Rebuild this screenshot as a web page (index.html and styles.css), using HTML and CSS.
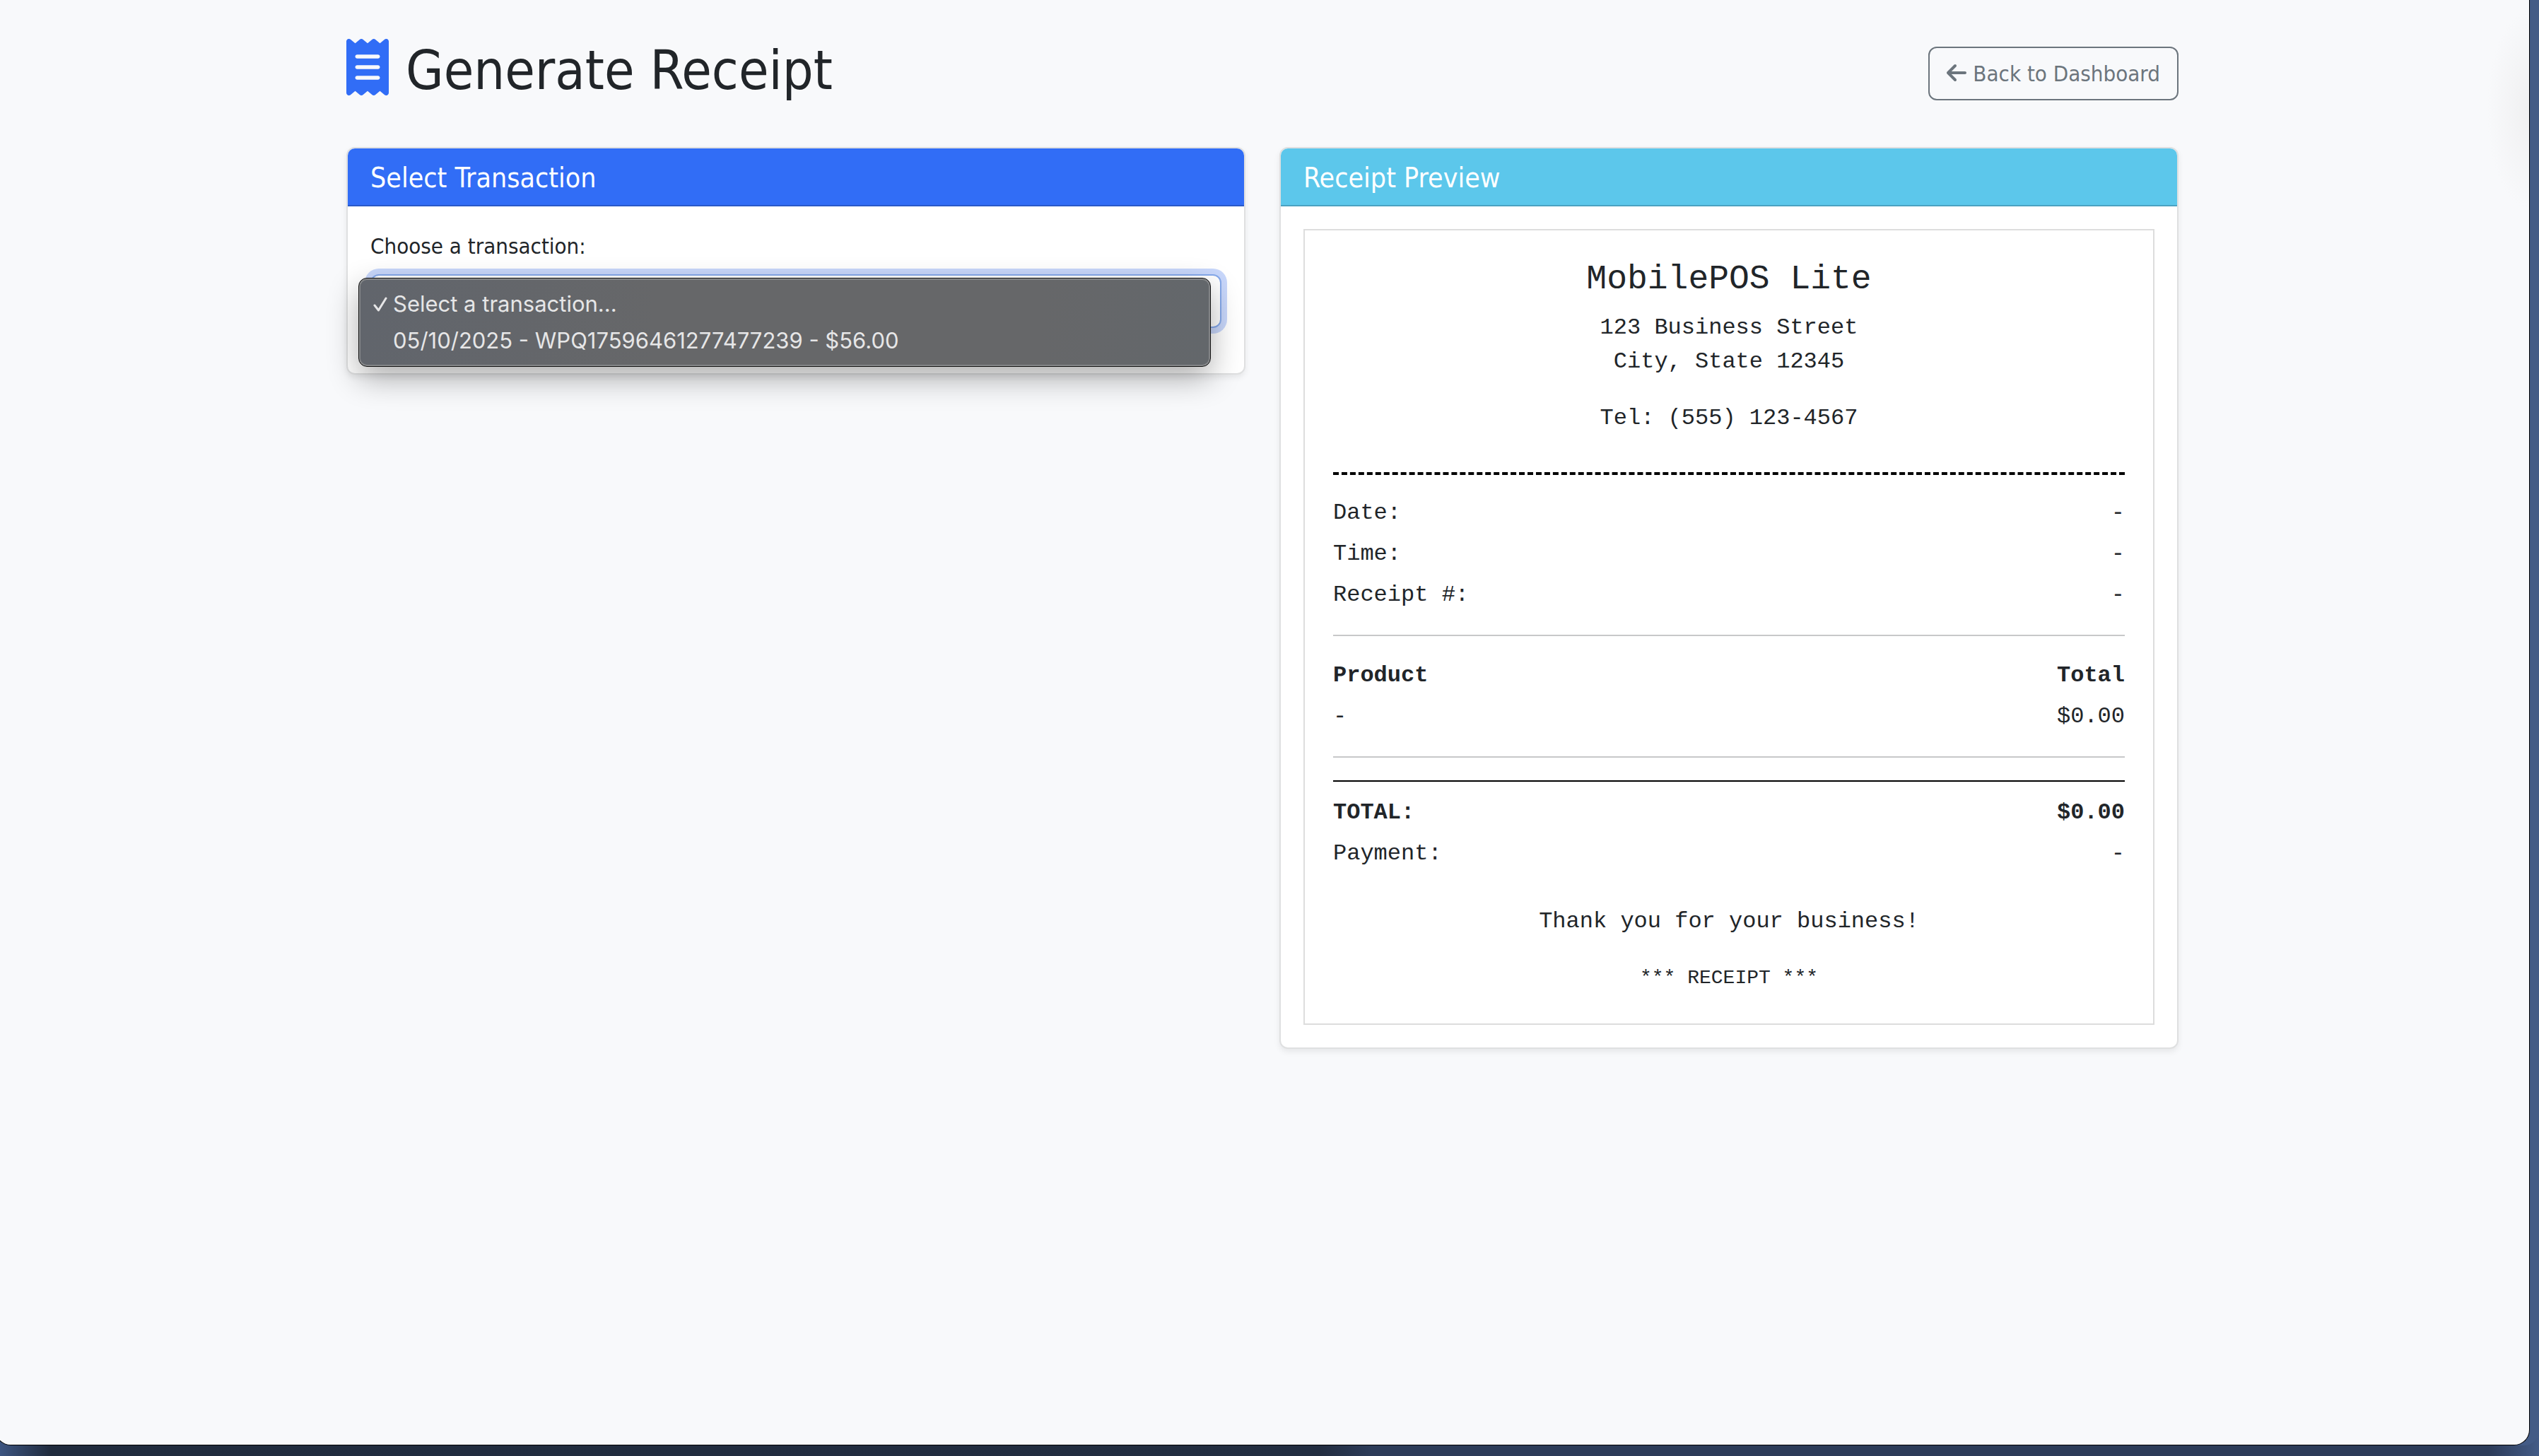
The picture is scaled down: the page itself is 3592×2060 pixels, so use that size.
FILE: index.html
```
<!DOCTYPE html>
<html lang="en">
<head>
  <meta charset="utf-8">
  <meta name="viewport" content="width=device-width, initial-scale=1">
  <title>Generate Receipt</title>
  <link rel="stylesheet" href="styles.css">
</head>
<body>
  <div class="window">
    <main class="container">
      <header class="page-header">
        <h1 class="page-title"><svg class="title-icon" viewBox="0 0 384 512" aria-hidden="true"><path d="M14 2.2C22.5-1.7 32.5-.3 39.6 5.8L80 40 120.4 5.8c9-7.7 22.3-7.7 31.2 0L192 40 232.4 5.8c9-7.7 22.2-7.7 31.2 0L304 40 344.4 5.8c7.1-6.1 17.1-7.5 25.6-3.6s14 12.4 14 21.8V488c0 9.4-5.5 17.900-14 21.800s-18.500 2.500-25.600-3.600L304 472l-40.400 34.200c-9 7.700-22.200 7.700-31.200 0L192 472l-40.400 34.200c-9 7.700-22.300 7.700-31.200 0L80 472 39.600 506.200c-7.100 6.100-17.100 7.500-25.600 3.600S0 497.400 0 488V24C0 14.600 5.500 6.100 14 2.200zM98 142c-10 0-18 8-18 18s8 18 18 18H286c10 0 18-8 18-18s-8-18-18-18H98zM98 238c-10 0-18 8-18 18s8 18 18 18H286c10 0 18-8 18-18s-8-18-18-18H98zM98 334c-10 0-18 8-18 18s8 18 18 18H286c10 0 18-8 18-18s-8-18-18-18H98z"/></svg> Generate Receipt</h1>
        <a class="btn-outline" href="#dashboard"><svg class="btn-icon" viewBox="0 0 448 512" aria-hidden="true"><path d="M9.400 233.400c-12.500 12.500-12.500 32.800 0 45.300l160 160c12.500 12.500 32.800 12.500 45.300 0s12.500-32.800 0-45.300L109.200 288 416 288c17.700 0 32-14.300 32-32s-14.300-32-32-32l-306.700 0L214.600 118.600c12.500-12.500 12.500-32.800 0-45.300s-32.800-12.500-45.300 0l-160 160z"/></svg> Back to Dashboard</a>
      </header>

      <div class="columns">
        <section class="card">
          <h2 class="card-header card-header-primary">Select Transaction</h2>
          <div class="card-body">
            <label class="form-label" for="transaction">Choose a transaction:</label>
            <div class="field">
              <select class="form-select" id="transaction">
                <option selected>Select a transaction...</option>
                <option>05/10/2025 - WPQ17596461277477239 - $56.00</option>
              </select>
              <ul class="menu" role="listbox" aria-label="Transactions">
                <li class="menu-item" role="option" aria-selected="true"><svg class="menu-check" viewBox="0 0 20 26" aria-hidden="true"><path d="M2 15l5.500 7L18 5"/></svg>Select a transaction...</li>
                <li class="menu-item" role="option" aria-selected="false">05/10/2025 - WPQ17596461277477239 - $56.00</li>
              </ul>
            </div>
          </div>
        </section>

        <section class="card">
          <h2 class="card-header card-header-info">Receipt Preview</h2>
          <div class="card-body">
            <article class="receipt">
              <header class="receipt-header">
                <h3 class="receipt-name">MobilePOS Lite</h3>
                <p>123 Business Street<br>City, State 12345</p>
                <p>Tel: (555) 123-4567</p>
              </header>
              <dl class="rows">
                <div class="row"><dt>Date:</dt><dd>-</dd></div>
                <div class="row"><dt>Time:</dt><dd>-</dd></div>
                <div class="row"><dt>Receipt #:</dt><dd>-</dd></div>
              </dl>
              <hr>
              <table class="items">
                <thead><tr><th scope="col">Product</th><th scope="col">Total</th></tr></thead>
                <tbody><tr><td>-</td><td>$0.00</td></tr></tbody>
              </table>
              <hr>
              <dl class="rows totals">
                <div class="row strong"><dt>TOTAL:</dt><dd>$0.00</dd></div>
                <div class="row"><dt>Payment:</dt><dd>-</dd></div>
              </dl>
              <footer class="receipt-footer">
                <p>Thank you for your business!</p>
                <p class="receipt-mark">*** RECEIPT ***</p>
              </footer>
            </article>
          </div>
        </section>
      </div>
    </main>
  </div>
</body>
</html>
```
FILE: styles.css
```
* {
  box-sizing: border-box;
}

body {
  margin: 0;
  overflow-x: hidden;
  background: linear-gradient(to right, #3c5480 0, #202b3d 2%, #222d40 52%, #2c3b58 54%, #2c3b58 98%, #435b86 100%);
  color: #212529;
  font: 31px/48px "DejaVu Sans Condensed", "DejaVu Sans", Tahoma, sans-serif;
}

h1, h2, h3, p, dl, dd, ul {
  margin: 0;
  padding: 0;
}

h1, h2, h3 {
  font-weight: 400;
}

/* Browser window over the desktop */
.window {
  min-height: calc(100vh - 15px);
  margin: 0 13px 15px -7px;
  border: solid #000;
  border-width: 0 1px 1px;
  border-radius: 0 0 22px 22px;
  background: radial-gradient(ellipse 60px 140px at 100% 155px, #f0f0f1, transparent) #f8f9fb;
  box-shadow: 14px 0 0 #435b86;
}

.container {
  max-width: 2640px;
  margin: 0 auto;
  padding: 48px 24px;
}

.page-header {
  display: flex;
  justify-content: space-between;
  align-items: center;
  margin-bottom: 48px;
}

.page-title {
  padding: 4px 0 12px;
  font-size: 77px;
  line-height: 96px;
}

.title-icon {
  width: 60px;
  height: 80px;
  margin-right: 2px;
  vertical-align: -9px;
  fill: #316df6;
}

.btn-outline {
  padding: 12px 24px;
  border: 2px solid #6c757d;
  border-radius: 12px;
  color: #6c757d;
  text-decoration: none;
}

.btn-icon {
  width: 28px;
  height: 32px;
  vertical-align: -4px;
  fill: currentColor;
}

.columns {
  display: grid;
  grid-template-columns: 1fr 1fr;
  gap: 48px;
  align-items: start;
}

.card {
  border: 2px solid #dfe0e1;
  border-radius: 12px;
  background: #fff;
  box-shadow: 0 4px 8px rgba(0, 0, 0, .075);
}

.card-header {
  padding: 18px 32px 14px;
  border-bottom: 2px solid;
  border-radius: 10px 10px 0 0;
  color: #fff;
  font-size: 39px;
}

.card-header-primary {
  border-color: #2959c8;
  background: #316df6;
}

.card-header-info {
  border-color: #4ba2c1;
  background: #5cc7eb;
}

.card-body {
  padding: 32px;
}

.form-label {
  display: block;
  margin-bottom: 16px;
}

.field {
  position: relative;
  margin-bottom: 32px;
}

.form-select {
  display: block;
  width: 100%;
  height: 76px;
  padding: 12px 24px;
  border: 2px solid #86aaec;
  border-radius: 12px;
  appearance: none;
  background: #fff;
  color: inherit;
  font: inherit;
  outline: 0;
  box-shadow: 0 0 0 8px #c8d7fb;
}

/* Open option list, laid over the select */
.menu {
  position: absolute;
  top: 5px;
  right: 15px;
  left: -17px;
  padding: 10px 0;
  border: 1px solid #111;
  border-radius: 12px;
  background: linear-gradient(to right, #61656c, #666769 35%, #666769 80%, #63676b);
  box-shadow: inset 0 0 0 2px #858789, 0 16px 44px rgba(0, 0, 0, .32);
  color: #e6e6e7;
  font-family: Inter, "Liberation Sans", sans-serif;
  line-height: 52px;
  list-style: none;
}

.menu-item {
  padding: 0 48px;
}

.menu-check {
  width: 20px;
  height: 26px;
  margin: 0 8px 0 -28px;
  vertical-align: -2px;
  fill: none;
  stroke: currentColor;
  stroke-width: 3;
  stroke-linecap: round;
  stroke-linejoin: round;
}

.receipt {
  padding: 40px;
  border: 2px solid #ddd;
  font-family: "Liberation Mono", "Courier New", monospace;
  font-size: 32px;
}

.receipt-header {
  margin-bottom: 30px;
  padding-bottom: 20px;
  border-bottom: 4px dashed #000;
  text-align: center;
}

.receipt-name {
  margin-bottom: 16px;
  font-size: 48px;
  line-height: 58px;
}

.receipt-header p {
  margin-bottom: 32px;
}

.row {
  display: flex;
  justify-content: space-between;
  padding-bottom: 10px;
}

.strong {
  font-weight: 700;
}

hr {
  margin: 22px 0 32px;
  border: 0;
  border-top: 2px solid #c7c8c9;
}

.items {
  width: 100%;
  border-collapse: collapse;
}

.items th,
.items td {
  padding: 0 0 10px;
  text-align: left;
}

.items th:last-child,
.items td:last-child {
  text-align: right;
}

.totals {
  padding-top: 20px;
  border-top: 2px solid #000;
}

.receipt-footer {
  margin-top: 38px;
  text-align: center;
}

.receipt-mark {
  margin-top: 32px;
  font-size: 28px;
}
```
